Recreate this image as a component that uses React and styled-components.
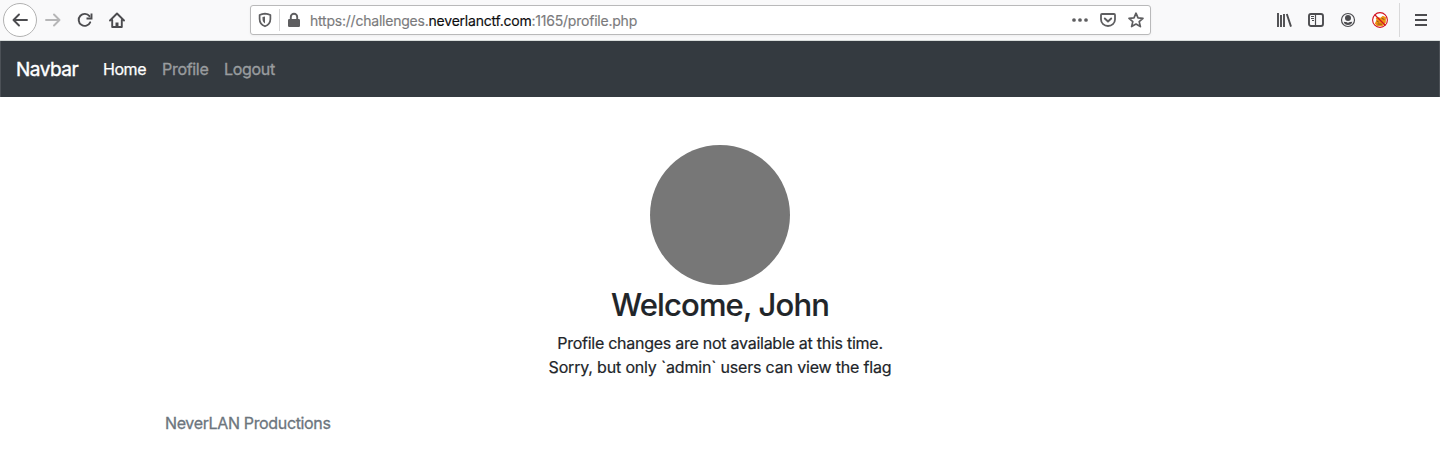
import React from "react";
import styled, { createGlobalStyle } from "styled-components";

const Global = createGlobalStyle`
  * { box-sizing: border-box; }
  body { margin: 0; background: #fff; color: #212529; font-family: Inter, "Liberation Sans", sans-serif; font-size: 16px; line-height: 1.5; overflow: hidden; }
  h2, p { margin: 0; }
`;

const Toolbar = styled.header`
  height: 41px;
  display: flex;
  align-items: flex-start;
  background: #f9f9fa;
  border-bottom: 1px solid #d8dcdb;
`;

const NavButtons = styled.div`
  display: flex;
  align-items: center;
  width: 250px;
  height: 40px;
  padding-left: 3px;
`;

const BackButton = styled.div`
  width: 34px;
  height: 34px;
  border: 1px solid #b2b2b2;
  border-radius: 50%;
  background: #fff;
  display: grid;
  place-items: center;
`;

const ToolButton = styled.div`
  width: 32px;
  height: 32px;
  display: grid;
  place-items: center;
`;

const AddressBar = styled.div`
  width: 901px;
  height: 30px;
  margin-top: 5px;
  display: flex;
  align-items: center;
  border: 1px solid #b9b9ba;
  border-radius: 3px;
  background: #fff;
  box-shadow: 0 1px 3px rgba(0, 0, 0, 0.05);
`;

const Identity = styled.div`
  display: flex;
  align-items: center;
  height: 22px;
  padding: 0 6px;
  border-right: ${(p) => (p.$divided ? "1px solid #d6d6d7" : "0")};
`;

const Url = styled.div`
  flex: 1;
  padding: 2px 0 0 2px;
  color: #7a7a7c;
  font-size: 14px;
  line-height: 20px;
  letter-spacing: -0.22px;
  -webkit-text-stroke: 0.15px currentColor;
  b { font-weight: 400; color: #0c0c0d; }
`;

const PageActions = styled.div`
  display: flex;
  align-items: center;
  gap: 12px;
  padding-right: 6px;
`;

const Extensions = styled.div`
  flex: 1;
  height: 40px;
  display: flex;
  align-items: center;
  justify-content: flex-end;
`;

const MenuButton = styled.div`
  height: 34px;
  margin-left: 3px;
  padding: 0 11px 0 13px;
  border-left: 1px solid #d9d9da;
  display: flex;
  align-items: center;
`;

const Icon = styled.svg`
  display: block;
  width: 16px;
  height: 16px;
  fill: none;
  stroke: ${(p) => p.$color || "#4c4c4f"};
  stroke-width: 1.9;
  stroke-linecap: round;
  stroke-linejoin: round;
`;

const Navbar = styled.nav`
  height: 56px;
  padding: 0 15px;
  display: flex;
  align-items: center;
  background: #343a40;
  border: solid #4c5157;
  border-width: 0 1px;
`;

const Brand = styled.span`
  width: 79px;
  padding-top: 2px;
  color: #fff;
  font-size: 19px;
  line-height: 30px;
  white-space: nowrap;
  letter-spacing: -0.5px;
  -webkit-text-stroke: 0.4px #fff;
`;

const NavLink = styled.span`
  width: ${(p) => p.$width}px;
  padding: 0 8px;
  white-space: nowrap;
  letter-spacing: ${(p) => (p.$active ? "-0.45px" : "-0.3px")};
  color: ${(p) => (p.$active ? "#fff" : "#999c9f")};
  -webkit-text-stroke: ${(p) => (p.$active ? "0.25px" : "0.35px")} currentColor;
`;

const Profile = styled.main`
  padding-top: 48px;
  display: flex;
  flex-direction: column;
  align-items: center;
`;

const Avatar = styled.div`
  width: 140px;
  height: 140px;
  border-radius: 50%;
  background: #777;
`;

const Title = styled.h2`
  height: 46px;
  font-size: 31px;
  font-weight: 500;
  line-height: 40px;
  letter-spacing: -0.85px;
  -webkit-text-stroke: 0.15px currentColor;
`;

const Message = styled.p`
  white-space: nowrap;
  letter-spacing: ${(p) => p.$tracking};
  -webkit-text-stroke: 0.2px currentColor;
`;

const Footer = styled.footer`
  width: 1110px;
  margin: 32px auto 0;
  color: #6c757d;
  letter-spacing: -0.35px;
  -webkit-text-stroke: 0.3px currentColor;
`;

const Back = () => (
  <Icon viewBox="0 0 16 16"><path d="M15 8H1.500M7 2.500 1.500 8 7 13.500" /></Icon>
);
const Forward = () => (
  <Icon viewBox="0 0 16 16" $color="#b6b6b7"><path d="M1 8h13.500M9 2.500 14.500 8 9 13.500" /></Icon>
);
const Reload = () => (
  <Icon viewBox="0 0 16 16"><path d="M13.200 10.300A6 6 0 1 1 12.500 4.200" /><path d="M14.500 1.500v5h-5" strokeLinecap="butt" strokeLinejoin="miter" /></Icon>
);
const Home = () => (
  <Icon viewBox="0 0 16 16"><path d="M1 8.500 8 1.500l7 7M3.200 8v7h9.600V8" /><path d="M8 14v-3.500" strokeWidth="3" strokeLinecap="butt" /></Icon>
);
const Shield = () => (
  <Icon viewBox="0 0 16 16" $color="#5e5e60"><path d="M8 1.700Q11 1.900 13.400 3v4c0 3.500-2 6-5.400 7.300C4.600 13 2.600 10.500 2.600 7V3Q5 1.900 8 1.700Z" strokeWidth="1.700" /><path d="M8 4.500v7C6.200 10.200 5.500 8.800 5.500 7V5.100Z" fill="#5e5e60" stroke="none" /></Icon>
);
const Lock = () => (
  <Icon viewBox="0 0 16 16" $color="#5e5e60"><rect x="2" y="7" width="12" height="8" rx="1.200" fill="#5e5e60" stroke="none" /><path d="M4.800 8V5a3.200 3.200 0 0 1 6.400 0v3" /></Icon>
);
const Dots = () => (
  <Icon viewBox="0 0 16 16"><g fill="#5e5e60" stroke="none"><circle cx="2" cy="8" r="1.850" /><circle cx="8" cy="8" r="1.850" /><circle cx="14" cy="8" r="1.850" /></g></Icon>
);
const Pocket = () => (
  <Icon viewBox="0 0 16 16" $color="#5e5e60"><path d="M2 2h12a1 1 0 0 1 1 1v4.500a7 6.500 0 0 1-14 0V3a1 1 0 0 1 1-1Z" strokeWidth="1.800" /><path d="m4.800 6.500 3.200 3 3.200-3" /></Icon>
);
const Star = () => (
  <Icon viewBox="0 0 16 16" $color="#5e5e60"><path d="m8 1.200 2 4.700 5 .4-3.800 3.300 1.200 5L8 12l-4.400 2.600 1.200-5L1 6.300l5-.4Z" strokeWidth="1.700" /></Icon>
);
const Library = () => (
  <Icon viewBox="0 0 16 16"><path d="M2 1v14M5 3v12M8 2v13M10.800 2l4.200 12.600" strokeWidth="1.900" strokeLinecap="butt" /></Icon>
);
const Sidebar = () => (
  <Icon viewBox="0 0 16 16"><rect x="1" y="2" width="14" height="12" rx="2" /><path d="M7.500 2v12" strokeWidth="1.200" /><path d="M3 4.500h3M3 6.500h3M4 8.500h2" strokeWidth="1" strokeLinecap="butt" /></Icon>
);
const Account = () => (
  <Icon viewBox="0 0 16 16"><circle cx="8" cy="8" r="6.500" strokeWidth="1.200" /><g fill="#4c4c4f" stroke="none"><circle cx="8" cy="6" r="3" /><path d="M3.700 9.700q2 .2 2.600.2.800.8 1.700.8t1.700-.8l2.600-.2Q11.500 13 8 13T3.700 9.700Z" /></g></Icon>
);
const BlockedFox = () => (
  <Icon viewBox="0 0 16 16"><circle cx="8" cy="8" r="7.300" fill="#fff" stroke="none" /><path d="m5.500 5 3 .8 2.300-2L14 5.200l-.3 5.500L10.500 14 5 14 2.800 11.500 4.500 8 3.700 6Z" fill="#ed9210" stroke="none" /><path d="m5 9 1.500 1M10 6.500l2 .8M6 12l3.500.2" stroke="#8e501d" strokeWidth="1" /><circle cx="8" cy="8" r="7.400" stroke="#d2101f" strokeWidth="1.100" /><path d="m3 3 10 10" stroke="#d2101f" strokeWidth="1.200" /></Icon>
);
const Menu = () => (
  <Icon viewBox="0 0 16 16"><path d="M2 3h12M2 8h12M2 13h12" strokeLinecap="butt" /></Icon>
);

export default function App() {
  return (
    <>
      <Global />
      <Toolbar>
        <NavButtons>
          <BackButton><Back /></BackButton>
          <ToolButton><Forward /></ToolButton>
          <ToolButton><Reload /></ToolButton>
          <ToolButton><Home /></ToolButton>
        </NavButtons>
        <AddressBar>
          <Identity $divided><Shield /></Identity>
          <Identity><Lock /></Identity>
          <Url>https://challenges.<b>neverlanctf.com</b>:1165/profile.php</Url>
          <PageActions><Dots /><Pocket /><Star /></PageActions>
        </AddressBar>
        <Extensions>
          <ToolButton><Library /></ToolButton>
          <ToolButton><Sidebar /></ToolButton>
          <ToolButton><Account /></ToolButton>
          <ToolButton><BlockedFox /></ToolButton>
          <MenuButton><Menu /></MenuButton>
        </Extensions>
      </Toolbar>
      <Navbar>
        <Brand>Navbar</Brand>
        <NavLink $active $width={59}>Home</NavLink>
        <NavLink $width={62}>Profile</NavLink>
        <NavLink $width={67}>Logout</NavLink>
      </Navbar>
      <Profile>
        <Avatar />
        <Title>Welcome, John</Title>
        <Message $tracking="-0.26px">Profile changes are not available at this time.</Message>
        <Message $tracking="-0.18px">Sorry, but only `admin` users can view the flag</Message>
      </Profile>
      <Footer>NeverLAN Productions</Footer>
    </>
  );
}
